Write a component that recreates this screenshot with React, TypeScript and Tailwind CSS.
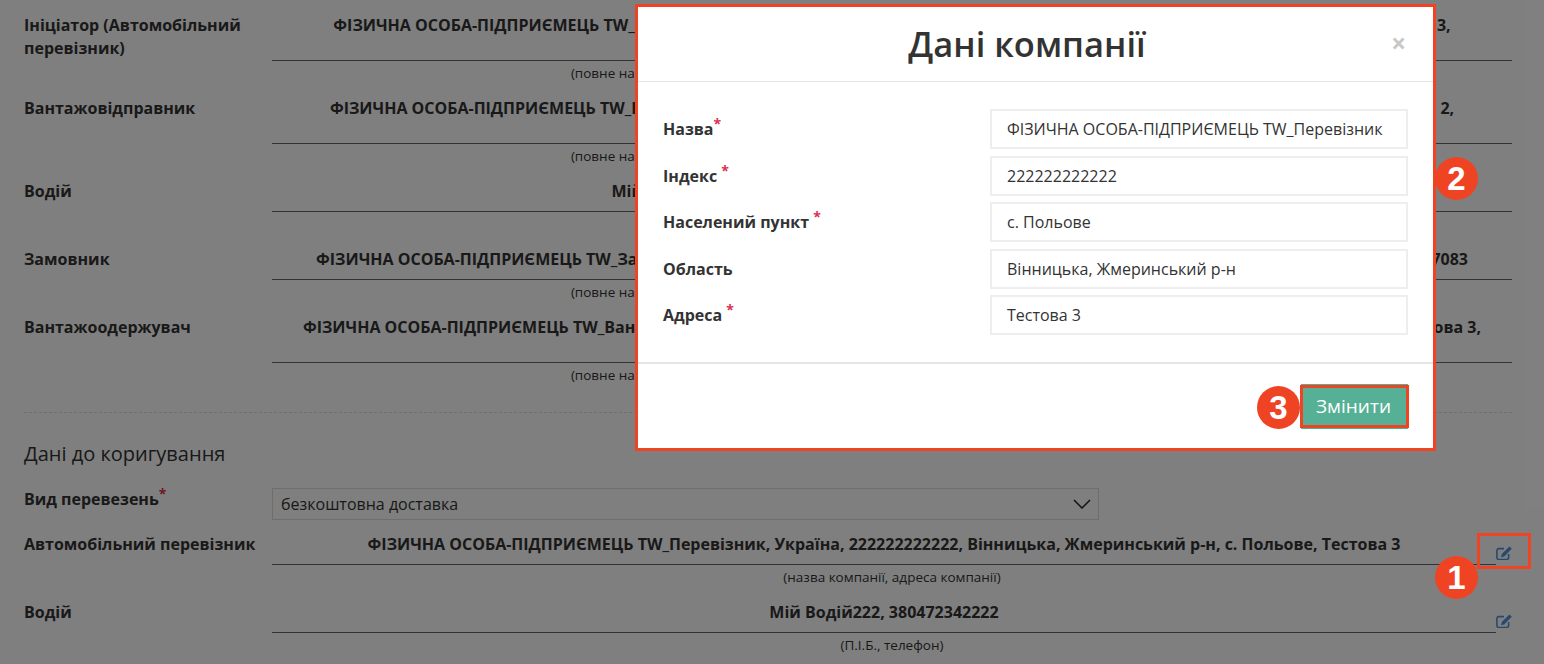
const Star = () => <span className="relative -top-[6px] text-[14px] leading-none font-bold text-[#dc3050]">*</span>;

const EditIcon = () => (
  <svg viewBox="0 0 16 14" className="h-[14px] w-4 text-[#4f93dd]">
    <path d="M8 2.6H3A2 2 0 0 0 .9 4.6v6.9a2 2 0 0 0 2 2h7.7a2 2 0 0 0 2-2V8" fill="none" stroke="currentColor" strokeWidth="1.6" />
    <path d="M13.4.4l2.4 2.4-7.6 7.6-3.2.8.8-3.2z" fill="currentColor" />
  </svg>
);

function Row({ label, hint, hasIcon, children }: { label: string; hint: string; hasIcon?: boolean; children: React.ReactNode }) {
  return (
    <div className="grid grid-cols-[248px_1fr] pb-4">
      <div className="text-[16px] leading-[23px] font-bold">{label}</div>
      <div>
        <div className="flex">
          <div className="flex-1 border-b border-[#666] pt-1 pb-[12px] text-center text-[16px] leading-[15px] font-bold">{children}</div>
          {hasIcon && <div className="w-4 pt-[13px]"><EditIcon /></div>}
        </div>
        <div className="mt-[5px] h-[15px] text-center text-[13.5px] leading-[15px] whitespace-nowrap">{hint}</div>
      </div>
    </div>
  );
}

function Field({ label, req, value }: { label: string; req?: "tight" | "space"; value: string }) {
  return (
    <div className="grid grid-cols-[327px_1fr] items-center">
      <div className="text-[16px] font-bold">
        {label}
        {req === "space" && " "}
        {req && <Star />}
      </div>
      <div className="flex h-10 items-center border-2 border-[#eee] pl-[15px] text-[16px]">{value}</div>
    </div>
  );
}

const longHint = "(повне найменування, код ЄДРПОУ, країна, індекс, область, район, населений пункт, вулиця, тел)";

export default function App() {
  return (
    <div className="relative h-[664px] overflow-hidden bg-white font-['Open_Sans',sans-serif] text-[#333]">
      <div className="pt-[13.5px] pr-8 pl-6">
        <Row label="Ініціатор (Автомобільний перевізник)" hint={longHint}>
          ФІЗИЧНА ОСОБА-ПІДПРИЄМЕЦЬ TW_Перевізник, код 1234, Україна, 222222222222, Вінницька, Жмеринський р-н, с. Польове, Тестова 3,
          <br />
          тел. 380472342222
        </Row>
        <Row label="Вантажовідправник" hint={longHint}>
          ФІЗИЧНА ОСОБА-ПІДПРИЄМЕЦЬ TW_Відправник, код 123-4, Україна, 222222222222, Вінницька, Жмеринський р-н, с. Польове, Тестова 2,
          <br />
          тел. 380472342222
        </Row>
        <Row label="Водій" hint="(П.І.Б., телефон)">
          Мій Водій222, 380472342222, посвідчення водія ВАА 12345678901234
        </Row>
        <Row label="Замовник" hint={longHint}>
          ФІЗИЧНА ОСОБА-ПІДПРИЄМЕЦЬ TW_Замовник, код 12-34, Україна, 222222222222, Вінницька, Жмеринський р-н, с. Польове, Тестова 1, 7083
        </Row>
        <Row label="Вантажоодержувач" hint={longHint}>
          ФІЗИЧНА ОСОБА-ПІДПРИЄМЕЦЬ TW_Вантажоодержувач, код 123, Україна, 222222222222, Вінницька, Жмеринський р-н, с. Польове, Тестова 3,
          <br />
          тел. 380472342222
        </Row>

        <div className="mt-[13.5px] border-t border-dashed border-[#ddd]" />

        <h3 className="mt-[28px] text-[20px] leading-[25px] font-normal">Дані до коригування</h3>

        <div className="mt-[22px] mb-[12.5px] grid grid-cols-[248px_1fr]">
          <div className="text-[16px] leading-[23px] font-bold">
            Вид перевезень
            <Star />
          </div>
          <div className="flex h-8 w-[827px] items-center justify-between border border-[#ddd] pr-[7px] pl-2 text-[16px]">
            безкоштовна доставка
            <svg viewBox="0 0 18 10" className="h-[10px] w-[18px]">
              <path d="M1 1l8 8 8-8" fill="none" stroke="#222" strokeWidth="1.5" />
            </svg>
          </div>
        </div>

        <Row label="Автомобільний перевізник" hint="(назва компанії, адреса компанії)" hasIcon>
          ФІЗИЧНА ОСОБА-ПІДПРИЄМЕЦЬ TW_Перевізник, Україна, 222222222222, Вінницька, Жмеринський р-н, с. Польове, Тестова 3
        </Row>
        <Row label="Водій" hint="(П.І.Б., телефон)" hasIcon>
          Мій Водій222, 380472342222
        </Row>
      </div>

      {/* dimmed backdrop */}
      <div className="absolute inset-0 bg-black/50" />

      {/* modal */}
      <div className="absolute top-1 left-[635px] flex h-[447px] w-[801px] flex-col border-[3px] border-[#ee4423] bg-white">
        <div className="relative flex h-[75px] shrink-0 items-center justify-center border-b border-[#e5e5e5] pr-[17px]">
          <h2 className="text-[34.5px] font-semibold">Дані компанії</h2>
          <span className="absolute top-[18px] right-[27px] text-[26px] leading-[36px] font-bold text-[#c8c8c8]">×</span>
        </div>
        <div className="flex flex-col gap-[6.5px] px-[25px] pt-[27px]">
          <Field label="Назва" req="tight" value="ФІЗИЧНА ОСОБА-ПІДПРИЄМЕЦЬ TW_Перевізник" />
          <Field label="Індекс" req="space" value="222222222222" />
          <Field label="Населений пункт" req="space" value="с. Польове" />
          <Field label="Область" value="Вінницька, Жмеринський р-н" />
          <Field label="Адреса" req="space" value="Тестова 3" />
        </div>
        <div className="mt-[27px] flex flex-1 items-start justify-end border-t-2 border-[#e5e5e5] pt-[20px] pr-[25px]">
          <button className="h-[45px] w-[107px] bg-[#55b096] pr-[2px] text-[19px] text-white">Змінити</button>
        </div>
      </div>

      {/* annotations */}
      <div className="absolute top-[385px] left-[1300px] h-[43px] w-[109px] border-[3px] border-[#ee4423]" />
      <div className="absolute top-[533px] left-[1477px] h-[36px] w-[54px] border-[3px] border-[#ee4423]" />
      {[
        { n: "2", pos: "top-[157px] left-[1435px]" },
        { n: "3", pos: "top-[386px] left-[1257px]" },
        { n: "1", pos: "top-[556px] left-[1435px]" },
      ].map((b) => (
        <div
          key={b.n}
          className={`absolute flex h-[43px] w-[43px] items-center justify-center rounded-full bg-[#ee4423] font-['Liberation_Sans',sans-serif] text-[33px] font-bold text-white ${b.pos}`}
        >
          {b.n}
        </div>
      ))}
    </div>
  );
}
